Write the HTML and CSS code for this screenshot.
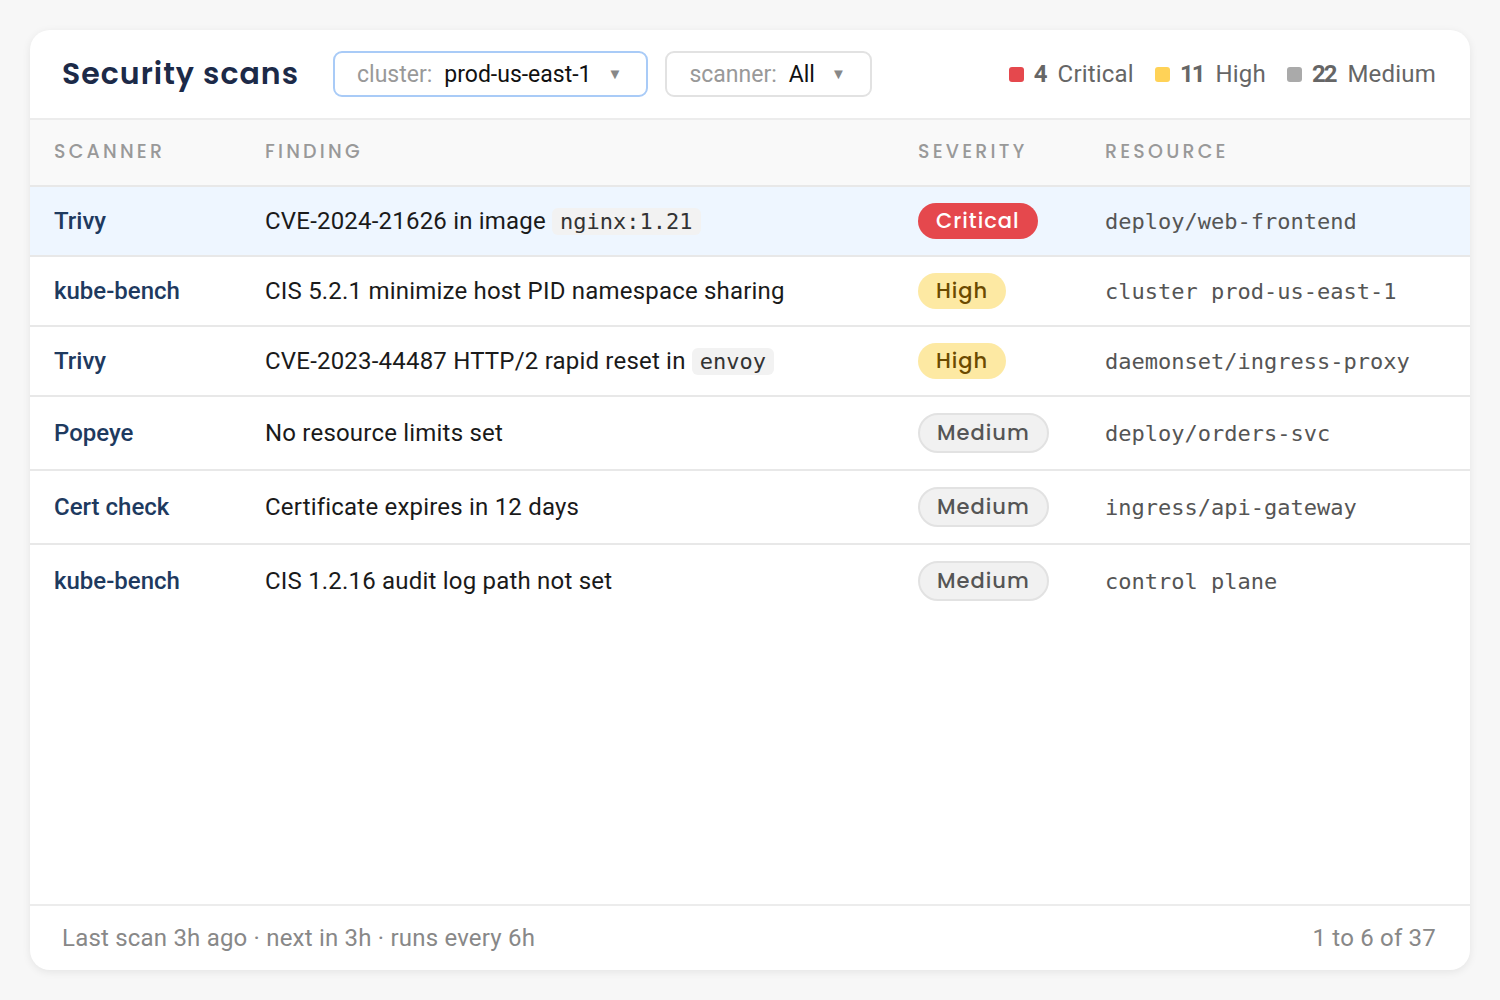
FILE: index.html
```html
<!DOCTYPE html>
<html lang="en">
<head>
    <meta charset="UTF-8">
    <title>Security scans</title>
    <link rel="stylesheet" href="styles.css">
</head>
<body>
    <div class="card">
        <div class="card-header">
            <h1>Security scans</h1>
            <div class="select active">
                <span class="select-label">cluster:</span>
                <span class="select-value">prod-us-east-1</span>
                <span class="caret">▼</span>
            </div>
            <div class="select">
                <span class="select-label">scanner:</span>
                <span class="select-value">All</span>
                <span class="caret">▼</span>
            </div>
            <div class="legend">
                <span class="legend-item"><i class="dot dot-critical"></i><b>4</b> Critical</span>
                <span class="legend-item"><i class="dot dot-high"></i><b>11</b> High</span>
                <span class="legend-item"><i class="dot dot-medium"></i><b>22</b> Medium</span>
            </div>
        </div>

        <div class="card-body">
            <table class="scans">
                <colgroup>
                    <col class="c-scanner">
                    <col class="c-finding">
                    <col class="c-severity">
                    <col>
                </colgroup>
                <thead>
                    <tr>
                        <th>Scanner</th>
                        <th>Finding</th>
                        <th>Severity</th>
                        <th>Resource</th>
                    </tr>
                </thead>
                <tbody>
                    <tr class="selected">
                        <td class="scanner">Trivy</td>
                        <td>CVE-2024-21626 in image <code>nginx:1.21</code></td>
                        <td><span class="badge critical">Critical</span></td>
                        <td class="resource">deploy/web-frontend</td>
                    </tr>
                    <tr>
                        <td class="scanner">kube-bench</td>
                        <td>CIS 5.2.1 minimize host PID namespace sharing</td>
                        <td><span class="badge high">High</span></td>
                        <td class="resource">cluster prod-us-east-1</td>
                    </tr>
                    <tr>
                        <td class="scanner">Trivy</td>
                        <td>CVE-2023-44487 HTTP/2 rapid reset in <code>envoy</code></td>
                        <td><span class="badge high">High</span></td>
                        <td class="resource">daemonset/ingress-proxy</td>
                    </tr>
                    <tr>
                        <td class="scanner">Popeye</td>
                        <td>No resource limits set</td>
                        <td><span class="badge medium">Medium</span></td>
                        <td class="resource">deploy/orders-svc</td>
                    </tr>
                    <tr>
                        <td class="scanner">Cert check</td>
                        <td>Certificate expires in 12 days</td>
                        <td><span class="badge medium">Medium</span></td>
                        <td class="resource">ingress/api-gateway</td>
                    </tr>
                    <tr>
                        <td class="scanner">kube-bench</td>
                        <td>CIS 1.2.16 audit log path not set</td>
                        <td><span class="badge medium">Medium</span></td>
                        <td class="resource">control plane</td>
                    </tr>
                </tbody>
            </table>
        </div>

        <div class="card-footer">
            <span>Last scan 3h ago · next in 3h · runs every 6h</span>
            <span>1 to 6 of 37</span>
        </div>
    </div>
</body>
</html>
```

FILE: styles.css
```css
body {
    margin: 0;
    padding: 30px;
    background: #f7f7f7;
    font-family: Roboto, "Liberation Sans", sans-serif;
    letter-spacing: 0.2px;
    color: #1a1a1a;
    height: 1000px;
    box-sizing: border-box;
}
.card {
    height: 940px;
    background: #ffffff;
    border-radius: 20px;
    box-shadow: 0 2px 8px rgba(0, 0, 0, 0.08);
    display: flex;
    flex-direction: column;
    overflow: hidden;
}
.card-header {
    height: 88px;
    display: flex;
    align-items: center;
    padding: 0 34px 0 32px;
    border-bottom: 2px solid #ececec;
    flex-shrink: 0;
}
h1 {
    margin: 0 34px 0 0;
    font-family: Poppins, "Open Sans", sans-serif;
    font-size: 30px;
    font-weight: 600;
    letter-spacing: 1px;
    color: #1c2a48;
}
.select {
    height: 42px;
    display: flex;
    align-items: center;
    padding: 0 24px 0 22px;
    border: 2px solid #e2e2e2;
    border-radius: 9px;
    font-size: 23px;
    letter-spacing: 0;
    margin-right: 17px;
}
.select.active {
    border-color: #a9cbf7;
}
.select-label {
    color: #999999;
    margin-right: 12px;
}
.select-value {
    color: #111111;
}
.caret {
    color: #888888;
    font-size: 15px;
    margin-left: 16px;
}
.legend {
    margin-left: auto;
    display: flex;
    gap: 21px;
    font-size: 24px;
    color: #666666;
}
.legend-item {
    display: flex;
    align-items: center;
}
.legend-item b {
    margin-right: 12px;
    letter-spacing: -2px;
}
.dot {
    width: 15px;
    height: 15px;
    border-radius: 3px;
    margin-right: 10px;
}
.dot-critical { background: #e5484d; }
.dot-high { background: #ffd257; }
.dot-medium { background: #aaaaaa; }

.card-body {
    flex: 1;
}
.scans {
    width: 100%;
    border-collapse: collapse;
    table-layout: fixed;
}
.c-scanner { width: 235px; }
.c-finding { width: 653px; }
.c-severity { width: 187px; }
.scans th {
    height: 66px;
    padding: 0 0 2px;
    box-sizing: border-box;
    text-align: left;
    background: #f9f9f9;
    border-bottom: 2px solid #e8e8e8;
    font-family: Poppins, "Open Sans", sans-serif;
    font-size: 19px;
    font-weight: 500;
    letter-spacing: 3.2px;
    text-transform: uppercase;
    color: #999999;
}
.scans th:first-child, .scans td:first-child {
    padding-left: 24px;
}
.scans td {
    padding: 16px 0;
    font-size: 24px;
    border-bottom: 2px solid #e8e8e8;
    white-space: nowrap;
}
.scans tr:last-child td {
    border-bottom: none;
}
.scans tr.selected td {
    background: #eef6ff;
}
.scans td.scanner {
    font-weight: 500;
    letter-spacing: 0;
    color: #1e3a5f;
}
code {
    font-family: "DejaVu Sans Mono", monospace;
    font-size: 22px;
    letter-spacing: 0;
    background: #f2f2f2;
    color: #333333;
    border-radius: 6px;
    padding: 1px 8px;
}
.scans td.resource {
    font-family: "DejaVu Sans Mono", monospace;
    font-size: 22px;
    letter-spacing: 0;
    color: #555555;
}
.badge {
    display: inline-block;
    height: 36px;
    line-height: 36px;
    padding: 0 18px;
    border-radius: 18px;
    font-family: Poppins, "Open Sans", sans-serif;
    font-size: 21px;
    font-weight: 500;
    letter-spacing: 1px;
    box-sizing: border-box;
    vertical-align: middle;
}
.badge.critical {
    background: #e5484d;
    color: #ffffff;
}
.badge.high {
    background: #fde9a3;
    color: #6b4a00;
}
.badge.medium {
    height: 40px;
    line-height: 36px;
    padding: 0 17px;
    border-radius: 20px;
    background: #f1f1f1;
    border: 2px solid #e2e2e2;
    color: #555555;
}
.card-footer {
    height: 64px;
    flex-shrink: 0;
    display: flex;
    align-items: center;
    justify-content: space-between;
    padding: 0 34px 0 32px;
    border-top: 2px solid #ececec;
    font-size: 24px;
    color: #888888;
}
```
